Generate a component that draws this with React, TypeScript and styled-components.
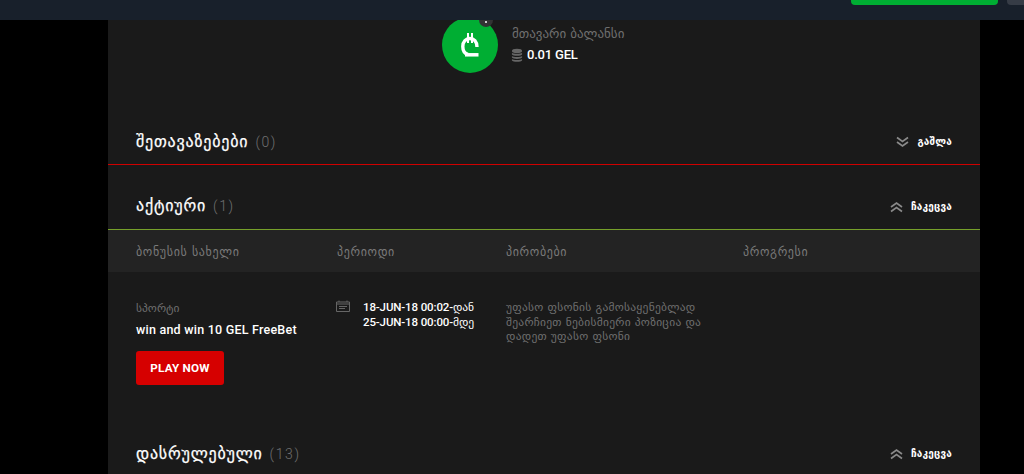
import React from "react";
import styled, { createGlobalStyle } from "styled-components";

const Global = createGlobalStyle`
  html, body { margin: 0; padding: 0; background: #000; height: 474px; overflow: hidden; }
  body { font-family: Roboto, "DejaVu Sans", sans-serif; }
  * { box-sizing: border-box; }
`;
const Page = styled.div`width: 1024px; height: 474px; overflow: hidden; background: #000;`;
const Header = styled.header`
  position: relative; z-index: 2; height: 20px; background: #18202b;
  display: flex; justify-content: flex-end; align-items: flex-start; padding-right: 26px;
`;
const GreenBar = styled.div`width: 147px; height: 5px; background: #00ae33; border-radius: 0 0 4px 4px;`;
const Ghost = styled.div`width: 17px; height: 5px; background: #363c46; border-radius: 0 0 0 4px; margin: 0 -26px 0 9px;`;
const Panel = styled.main`width: 872px; height: 454px; margin-left: 108px; background: #1a1a1a; display: flex; flex-direction: column;`;
const Balance = styled.section`height: 89px; margin-top: -3px; flex: none; display: flex; align-items: flex-start; padding-left: 334px; gap: 14px;`;
const Circle = styled.div`
  position: relative; width: 56px; height: 56px; border-radius: 50%; background: #00ae33; flex: none;
  display: flex; align-items: center; justify-content: center;
`;
const Badge = styled.span`
  position: absolute; right: 5px; top: -4px; width: 14px; height: 14px; border-radius: 50%; background: #333;
  &::after { content: ""; position: absolute; left: 6px; top: 8px; width: 2px; height: 2px; background: #ccc; }
`;
const BalanceText = styled.div`display: flex; flex-direction: column; padding-top: 9px;`;
const BalanceLabel = styled.div`font: 13px/16px "DejaVu Sans", sans-serif; color: #6f6f6f;`;
const Amount = styled.div`display: flex; align-items: center; gap: 4px; margin: 4px 0 0 -1px; font: 500 13px/18px Roboto, sans-serif; color: #fff; letter-spacing: -0.2px;`;
const SectionHead = styled.div<{ $h: number; $pb: number; $line?: string }>`
  height: ${p => p.$h}px; padding: 0 28px ${p => p.$pb}px; display: flex; justify-content: space-between; align-items: flex-end; flex: none;
  border-bottom: ${p => (p.$line ? `1px solid ${p.$line}` : "none")};
`;
const TitleWrap = styled.div`display: flex; align-items: baseline; gap: 7px;`;
const Title = styled.span`font: 16px/20px "DejaVu Sans", sans-serif; color: #fff; letter-spacing: 0.8px; -webkit-text-stroke: 0.25px #fff;`;
const Count = styled.span`font: 300 14px/20px Roboto, sans-serif; color: #707070; letter-spacing: 1.6px;`;
const Toggle = styled.div<{ $nudge?: number }>`display: flex; align-items: center; gap: 8px; height: 20px; margin-bottom: ${p => p.$nudge ?? 0}px; font: bold 10px/12px "DejaVu Sans", sans-serif; color: #fff; letter-spacing: 0.2px;`;
const TableHead = styled.div`height: 42px; flex: none; background: #232323; display: grid; grid-template-columns: 201px 169px 237px 1fr; padding: 2px 0 0 28px; align-items: center;`;
const Th = styled.div`font: 12px/14px "DejaVu Sans", sans-serif; color: #7a7a7a; letter-spacing: 0.65px;`;
const Row = styled.div`height: 152px; flex: none; display: grid; grid-template-columns: 201px 169px 237px 1fr; padding: 29px 0 0 28px; align-items: start;`;
const Category = styled.div`font: 11.5px/14px "DejaVu Sans", sans-serif; color: #6f6f6f;`;
const BonusName = styled.div`font: 500 12.5px/16px Roboto, sans-serif; color: #fff; margin-top: 7px; letter-spacing: 0.23px;`;
const PlayButton = styled.button`
  display: block; margin-top: 13px; width: 88px; height: 34px; border: none; border-radius: 3px;
  background: #d60000; color: #fff; font: 700 11.7px/34px Roboto, sans-serif; padding: 0; letter-spacing: 0.2px;
`;
const Period = styled.div`display: flex; gap: 13px; margin: -1px 0 0 -1px;`;
const Dates = styled.div`font: 500 11.5px/15px Roboto, "DejaVu Sans", sans-serif; color: #fff; white-space: nowrap; letter-spacing: -0.12px;`;
const Terms = styled.div`font: 11.5px/14.5px "DejaVu Sans", sans-serif; color: #6f6f6f; width: 215px; margin-top: -1px; letter-spacing: 0.25px;`;

const Chevrons = ({ up }: { up?: boolean }) => (
  <svg width="13" height="12" viewBox="0 0 13 12" fill="none" stroke="#8a8a8a" strokeWidth="1.7" style={{ transform: up ? "scaleY(-1)" : undefined }}>
    <path d="M1 1.500l5.500 4 5.500-4M1 6l5.500 4 5.500-4" />
  </svg>
);
const Lari = () => (
  <svg width="18" height="24" viewBox="0 0 18 24" fill="none" stroke="#fff">
    <path d="M4 21.800h13.500" strokeWidth="3.500" />
    <path d="M7 21.500C3.500 20.500 1.800 17.500 1.800 13.500C1.800 8.500 5 5.500 8.900 5.500S16 8.500 16 14" strokeWidth="3.400" />
    <path d="M7 0v10M11 0v10" strokeWidth="2" />
  </svg>
);
const Coins = () => (
  <svg width="12" height="15" viewBox="0 0 13 15" fill="#666">
    <ellipse cx="6.500" cy="2.500" rx="5.500" ry="2.200" />
    <path d="M1 4.500c1 1.500 10 1.500 11 0v1.800c-1 2-10 2-11 0zM1 8c1 1.500 10 1.500 11 0v1.800c-1 2-10 2-11 0zM1 11.300c1 1.500 10 1.500 11 0v1.500c-1 2-10 2-11 0z" />
  </svg>
);
const CalendarIcon = () => (
  <svg width="14" height="12" viewBox="0 0 14 12" fill="none" stroke="#666" strokeWidth="1" style={{ flex: "none" }}>
    <path d="M.5 2h13v9.500H.5zM.5 4h13M3 .5V2M11 .5V2M3 6.500h8M3 8.500h6" />
  </svg>
);

export default function App() {
  return (
    <Page>
      <Global />
      <Header><GreenBar /><Ghost /></Header>
      <Panel>
        <Balance>
          <Circle><Lari /><Badge /></Circle>
          <BalanceText>
            <BalanceLabel>მთავარი ბალანსი</BalanceLabel>
            <Amount><Coins />0.01 GEL</Amount>
          </BalanceText>
        </Balance>
        <SectionHead $h={59} $pb={12} $line="#d00000">
          <TitleWrap><Title>შეთავაზებები</Title><Count>(0)</Count></TitleWrap>
          <Toggle><Chevrons />გაშლა</Toggle>
        </SectionHead>
        <SectionHead $h={65} $pb={13} $line="#76a02a">
          <TitleWrap><Title>აქტიური</Title><Count>(1)</Count></TitleWrap>
          <Toggle $nudge={-1}><Chevrons up />ჩაკეცვა</Toggle>
        </SectionHead>
        <TableHead>
          <Th>ბონუსის სახელი</Th><Th>პერიოდი</Th><Th>პირობები</Th><Th>პროგრესი</Th>
        </TableHead>
        <Row>
          <div>
            <Category>სპორტი</Category>
            <BonusName>win and win 10 GEL FreeBet</BonusName>
            <PlayButton>PLAY NOW</PlayButton>
          </div>
          <Period>
            <CalendarIcon />
            <Dates>18-JUN-18 00:02-დან<br />25-JUN-18 00:00-მდე</Dates>
          </Period>
          <Terms>უფასო ფსონის გამოსაყენებლად შეარჩიეთ ნებისმიერი პოზიცია და დადეთ უფასო ფსონი</Terms>
          <div />
        </Row>
        <SectionHead $h={40} $pb={0}>
          <TitleWrap><Title>დასრულებული</Title><Count>(13)</Count></TitleWrap>
          <Toggle><Chevrons up />ჩაკეცვა</Toggle>
        </SectionHead>
      </Panel>
    </Page>
  );
}
